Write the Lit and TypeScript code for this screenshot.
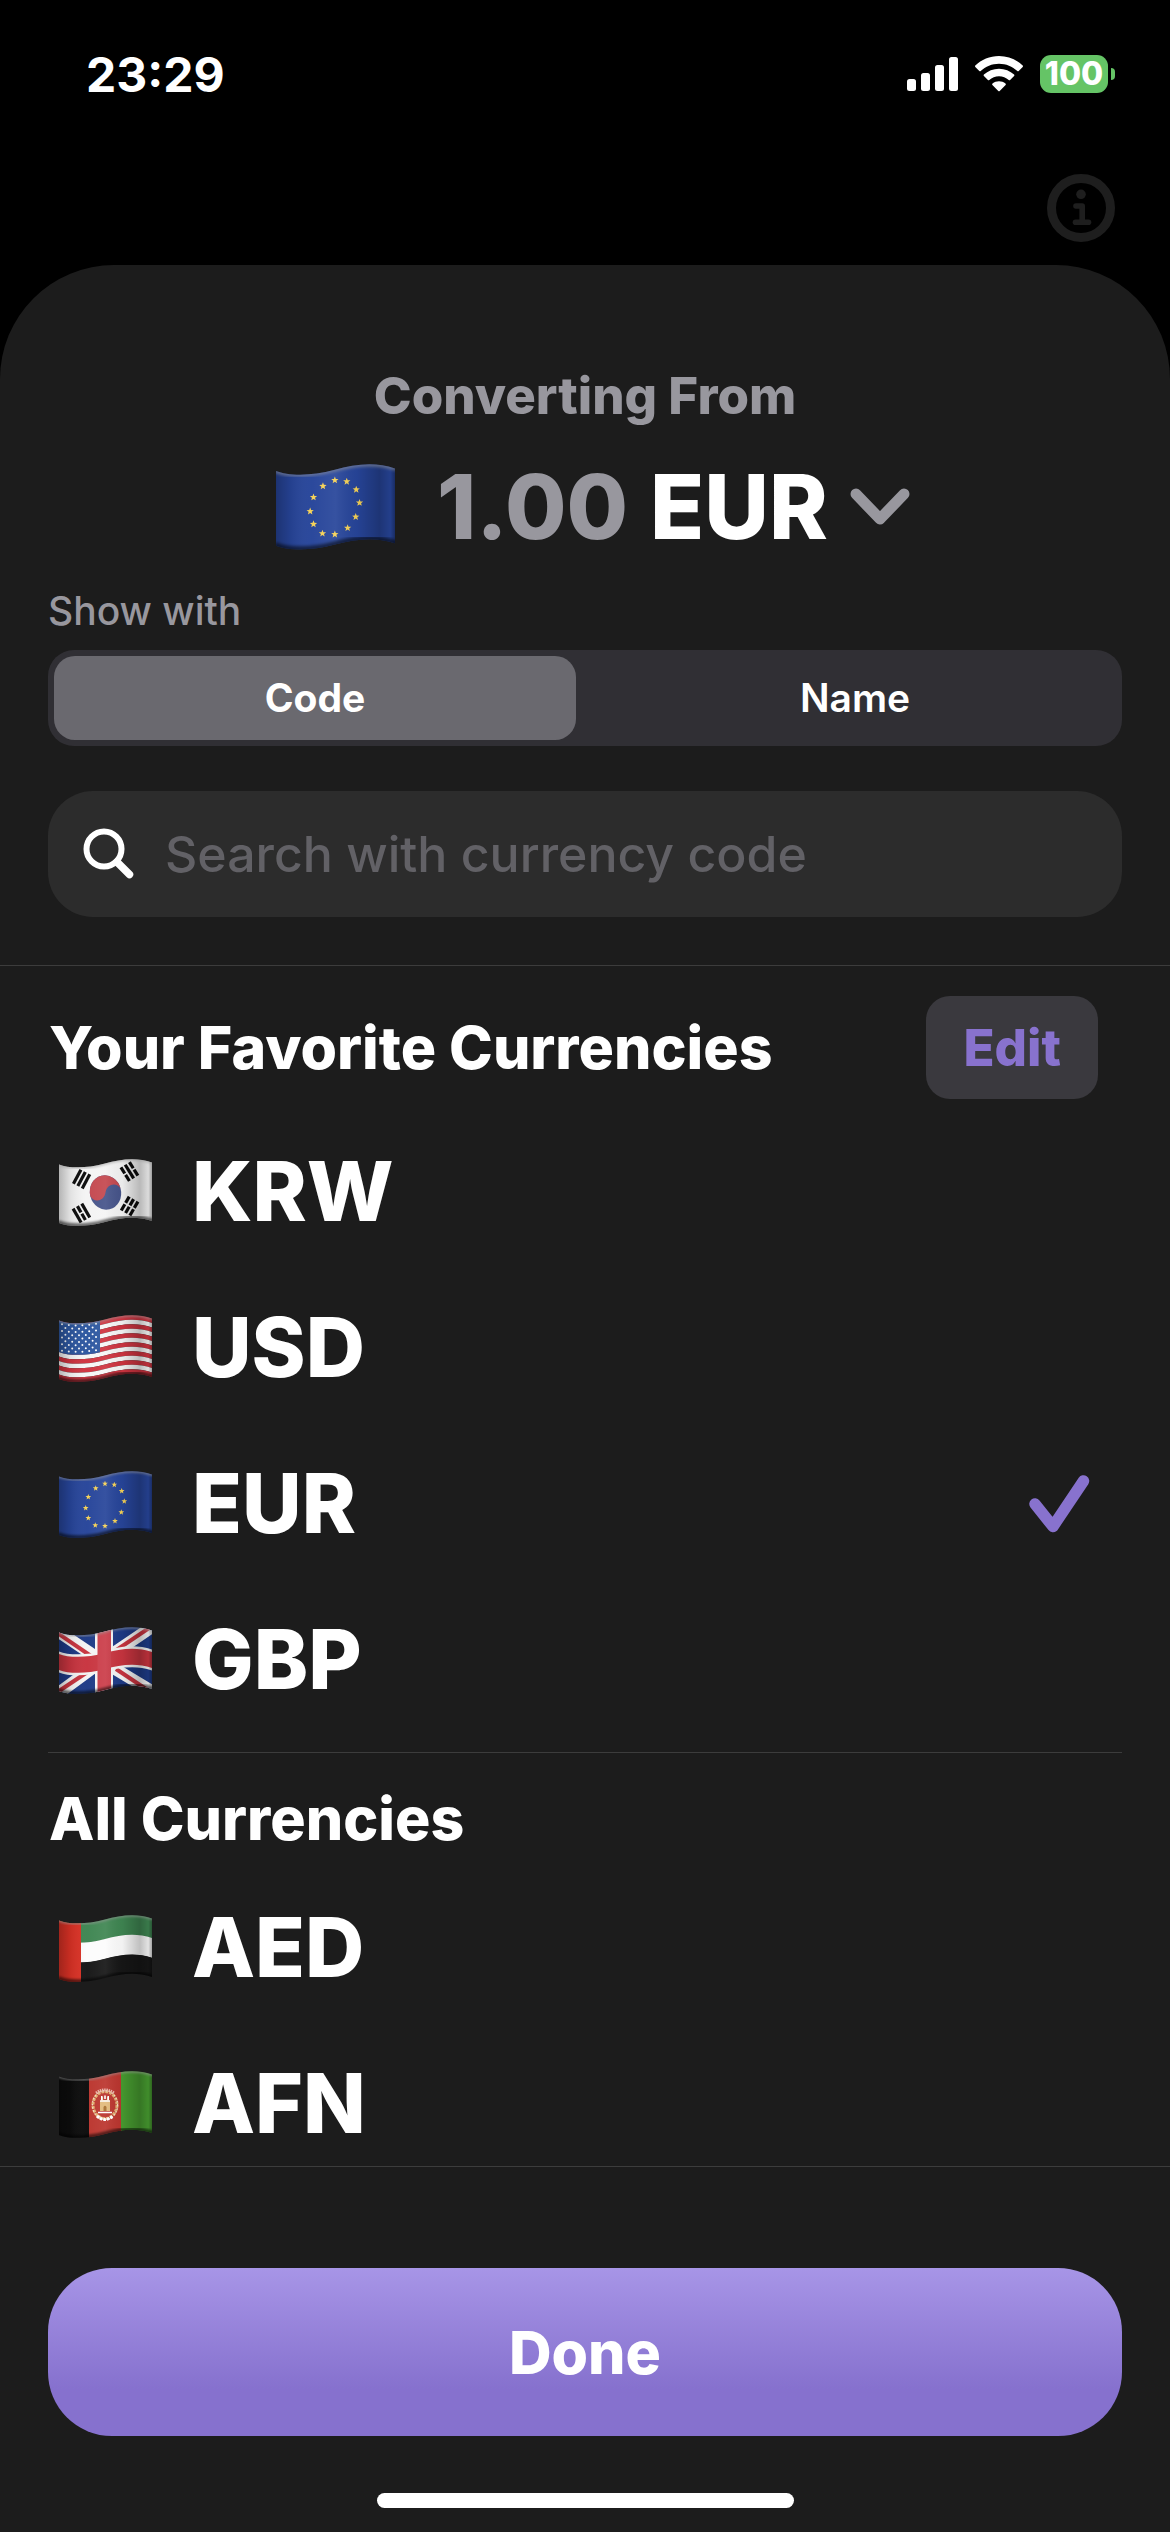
import { LitElement, html, css, svg, nothing } from "lit";
import { customElement, property, state } from "lit/decorators.js";

/** Wave that every horizontal edge of a flag follows, shifted down by y. */
const waveForward = (y: number) => `M-1,${5 + y} C8,${9 + y} 26,${10 + y} 46,${4.5 + y} C62,${y} 78,${-2 + y} 94,${3.8 + y}`;
const waveBack = (y: number) => `L94,${3.8 + y} C78,${-2 + y} 62,${y} 46,${4.5 + y} C26,${10 + y} 8,${9 + y} -1,${5 + y} Z`;
const FLAG_HEIGHT = 58.5;

const band = (from: number, to: number, fill: string) =>
  svg`<path d=${waveForward(from) + waveBack(to)} fill=${fill}></path>`;

const starPoints = (cx: number, cy: number, r: number) =>
  Array.from({ length: 10 }, (_, i) => {
    const a = (i * Math.PI) / 5 - Math.PI / 2;
    const d = i % 2 ? r * 0.42 : r;
    return `${(cx + d * Math.cos(a)).toFixed(2)},${(cy + d * Math.sin(a)).toFixed(2)}`;
  }).join(" ");

const waveOffset = (x: number) => 4.6 + 3.2 * Math.cos(((x - 18) / 57) * Math.PI);

const trigram = (x: number, y: number, angle: number, broken: boolean[]) => svg`
  <g transform="translate(${x} ${y}) rotate(${angle})">
    ${broken.map((b, i) =>
      b
        ? svg`<rect x="-8" y=${i * 5 - 6.5} width="7.2" height="3.2"></rect><rect x="0.8" y=${i * 5 - 6.5} width="7.2" height="3.2"></rect>`
        : svg`<rect x="-8" y=${i * 5 - 6.5} width="16" height="3.2"></rect>`
    )}
  </g>`;

const southKorea = () => svg`
  <rect width="93" height="68" fill="#f4f4f4"></rect>
  <g transform="rotate(-14 46.5 33.5)">
    <ellipse cx="46.5" cy="33.5" rx="15.6" ry="17.2" fill="#46548a"></ellipse>
    <path d="M30.9,33.5 A15.6,17.2 0 0 1 62.1,33.5 C60,26 50,25 46.5,33.5 C43,42 33,41 30.9,33.5Z" fill="#c4484f"></path>
  </g>
  <g fill="#0b0b0b">
    ${trigram(22.5, 20, -62, [false, false, false])}
    ${trigram(70.5, 12.5, 58, [true, false, true])}
    ${trigram(22.5, 54, 60, [false, true, false])}
    ${trigram(70.5, 47, -60, [true, true, true])}
  </g>`;

const unitedStates = () => {
  const h = FLAG_HEIGHT / 13;
  return svg`
    ${Array.from({ length: 13 }, (_, i) =>
      band(i * h - (i ? 0 : 2), (i + 1) * h + (i === 12 ? 2 : 0), i % 2 ? "#f6f6f6" : "#cf3440")
    )}
    <g clip-path="url(#canton)">${band(-2, h * 7, "#2d57a0")}</g>
    <g fill="#fff">
      ${Array.from({ length: 9 }, (_, r) =>
        Array.from({ length: r % 2 ? 5 : 6 }, (_, c) => {
          const x = 3 + c * 6.8 + (r % 2 ? 3.4 : 0);
          return svg`<circle cx=${x} cy=${waveOffset(x) + 2.6 + r * 3.3} r="1"></circle>`;
        })
      )}
    </g>`;
};

const EU_STARS = [
  [46, 12.7], [55.3, 13.7], [62.7, 20], [65.3, 30.3], [62.3, 41.3], [56, 50],
  [46, 55], [36.3, 54.3], [29.3, 47], [26.7, 37], [29.3, 26], [36.7, 17.3],
];

const europe = () => svg`
  <rect width="93" height="68" fill="#27459a"></rect>
  ${EU_STARS.map(([x, y]) => svg`<polygon points=${starPoints(x, y, 3)} fill="#f6d256"></polygon>`)}`;

const unitedKingdom = () => svg`
  <rect width="93" height="68" fill="#1d3a86"></rect>
  <g stroke="#f4f4f4" stroke-width="12">
    <path d="M-3,3 L46,36 L96,66"></path><path d="M96,-2 L46,32 L-3,68"></path>
  </g>
  <g stroke="#c8343f" stroke-width="4">
    <path d="M-3,5 L32,29"></path><path d="M57,42 L96,68"></path>
    <path d="M96,-3 L56,24"></path><path d="M36,40 L-3,66"></path>
  </g>
  <rect x="36" width="18" height="68" fill="#f4f4f4"></rect>
  ${band(19, 40, "#f4f4f4")}
  ${band(21.5, 37.5, "#c8343f")}
  <rect x="38.5" width="13.5" height="68" fill="#cb3d49"></rect>`;

const emirates = () => svg`
  ${band(-2, 20, "#3f8652")}
  ${band(19.5, 39.5, "#fcfcfc")}
  ${band(39.2, 62, "#161616")}
  <rect width="22" height="68" fill="#d93125"></rect>`;

const afghanistan = () => svg`
  <rect width="31" height="68" fill="#0c0c0c"></rect>
  <rect x="30" width="33" height="68" fill="#bb352e"></rect>
  <rect x="62" width="31" height="68" fill="#479c30"></rect>
  <ellipse cx="46" cy="34" rx="12" ry="13.5" fill="none" stroke="#e0b070" stroke-width="3" stroke-dasharray="3 1"></ellipse>
  <ellipse cx="46" cy="34" rx="12.6" ry="14.4" fill="none" stroke="#f3dcc8" stroke-width="1.2" stroke-dasharray="1.6 1.6"></ellipse>
  <path d="M37,22 Q46,16 55,22" fill="none" stroke="#e8b4a8" stroke-width="3" stroke-dasharray="1.4 .8"></path>
  <path d="M38,45 Q46,52 54,45" fill="none" stroke="#fff" stroke-width="3" stroke-dasharray="2.6 1"></path>
  <path d="M41,40 V30 H42 V26 H44 V29 H48 V26 H50 V30 H51 V40Z" fill="#e2bb7c"></path>
  <path d="M41,30 H51 M42.8,25 V29 M46,24.5 V28 M49.2,25 V29" stroke="#fff" stroke-width="1.6"></path>
  <path d="M44.5,40 V36 Q46,33.5 47.5,36 V40Z" fill="#a8702e"></path>
  <path d="M39,41.5 H53" stroke="#fff" stroke-width="1.4"></path>`;

const FLAGS: Record<string, () => unknown> = {
  KRW: southKorea,
  USD: unitedStates,
  EUR: europe,
  GBP: unitedKingdom,
  AED: emirates,
  AFN: afghanistan,
};

@customElement("currency-flag")
class CurrencyFlag extends LitElement {
  static styles = css`
    :host {
      display: block;
      flex: none;
      width: 93px;
    }
    .flag {
      display: block;
      width: 100%;
      height: auto;
    }
  `;

  @property() code = "EUR";

  render() {
    const outline = waveForward(0) + waveBack(FLAG_HEIGHT);
    return html`
      <svg class="flag" viewBox="0 0 93 67" aria-hidden="true">
        <defs>
          <clipPath id="outline"><path d=${outline}></path></clipPath>
          <clipPath id="canton"><rect width="41" height="68"></rect></clipPath>
          <linearGradient id="folds">
            <stop offset="0" stop-color="#000" stop-opacity=".26"></stop>
            <stop offset=".12" stop-color="#000" stop-opacity=".08"></stop>
            <stop offset=".3" stop-color="#fff" stop-opacity=".02"></stop>
            <stop offset=".5" stop-color="#fff" stop-opacity=".07"></stop>
            <stop offset=".68" stop-color="#000" stop-opacity=".04"></stop>
            <stop offset=".87" stop-color="#000" stop-opacity=".24"></stop>
            <stop offset=".96" stop-color="#000" stop-opacity=".1"></stop>
            <stop offset="1" stop-color="#000" stop-opacity=".35"></stop>
          </linearGradient>
          <filter id="soft" x="-10%" y="-20%" width="120%" height="140%"><feGaussianBlur stdDeviation="1.3"></feGaussianBlur></filter>
        </defs>
        <g clip-path="url(#outline)">
          ${(FLAGS[this.code] ?? europe)()}
          <rect width="93" height="68" fill="url(#folds)"></rect>
          <path d=${waveForward(0)} fill="none" stroke="#999" stroke-opacity=".55" stroke-width="3" filter="url(#soft)"></path>
          <path d=${waveForward(FLAG_HEIGHT)} fill="none" stroke="#000" stroke-opacity=".55" stroke-width="5" filter="url(#soft)"></path>
        </g>
      </svg>
    `;
  }
}

@customElement("currency-row")
class CurrencyRow extends LitElement {
  static styles = css`
    :host {
      display: block;
    }
    .row {
      display: flex;
      align-items: center;
      gap: 40px;
      width: 100%;
      height: 156px;
      padding: 0 80px 0 59px;
      border: 0;
      background: none;
      color: #fff;
      font: 800 82px/96px Inter, "Liberation Sans", sans-serif;
      text-align: left;
    }
    .code {
      flex: 1;
    }
    .check {
      width: 61px;
      height: 60px;
    }
  `;

  @property() code = "";
  @property({ type: Boolean }) selected = false;

  render() {
    return html`
      <button class="row" type="button" aria-pressed=${this.selected}>
        <currency-flag code=${this.code}></currency-flag>
        <span class="code">${this.code}</span>
        ${this.selected
          ? html`<svg class="check" viewBox="0 0 61 60" aria-hidden="true">
              <path d="M6,30 L24,52.5 L54.5,7" fill="none" stroke="#8872ce" stroke-width="11.5" stroke-linecap="round" stroke-linejoin="round"></path>
            </svg>`
          : nothing}
      </button>
    `;
  }
}

@customElement("app-root")
class AppRoot extends LitElement {
  static styles = css`
    :host {
      display: flex;
      flex-direction: column;
      height: 100vh;
      background: #000;
      color: #fff;
      font-family: Inter, "Liberation Sans", sans-serif;
    }
    * {
      box-sizing: border-box;
    }
    button,
    input {
      margin: 0;
      border: 0;
      font-family: inherit;
    }
    .status {
      display: flex;
      align-items: center;
      justify-content: space-between;
      height: 148px;
      padding: 0 55px 0 86px;
      font-size: 48px;
      font-weight: 700;
    }
    .indicators {
      display: flex;
      align-items: center;
      gap: 17px;
    }
    .signal {
      width: 51px;
      height: 34px;
    }
    .wifi {
      width: 48px;
      height: 36px;
    }
    .battery {
      display: flex;
      align-items: center;
      gap: 3px;
    }
    .level {
      width: 68px;
      border-radius: 11px;
      background: #65c466;
      font-size: 32px;
      font-weight: 800;
      line-height: 38px;
      text-align: center;
    }
    .tip {
      width: 4px;
      height: 12px;
      border-radius: 0 4px 4px 0;
      background: #65c466;
    }
    .nav {
      display: flex;
      align-items: flex-end;
      justify-content: flex-end;
      height: 117px;
      padding: 0 55px 23px;
    }
    .info {
      padding: 0;
      background: none;
    }
    .info svg {
      display: block;
      width: 68px;
      height: 68px;
    }
    .sheet {
      display: flex;
      flex: 1;
      flex-direction: column;
      min-height: 0;
      border-radius: 114px 114px 0 0;
      background: #1c1c1c;
    }
    .top {
      display: flex;
      flex-direction: column;
      padding: 95px 48px 48px;
      border-bottom: 1px solid #3c3c3c;
    }
    .title {
      margin: 0 0 20px;
      color: #98979e;
      font-size: 51px;
      font-weight: 800;
      line-height: 72px;
      text-align: center;
    }
    .source {
      display: flex;
      align-items: center;
      align-self: center;
      height: 110px;
      margin-bottom: 25px;
      padding: 0 0 0 16px;
      background: none;
      color: #fff;
      font-size: 89px;
      font-weight: 800;
      line-height: 110px;
    }
    .source-flag {
      width: 119px;
      margin-right: 42px;
    }
    .amount,
    .caption {
      color: #98979e;
    }
    .amount {
      margin-right: 22px;
    }
    .chevron {
      width: 60px;
      height: 38px;
      margin-left: 22px;
    }
    .caption {
      margin-bottom: 15px;
      font-size: 39px;
      font-weight: 500;
      line-height: 48px;
    }
    .segments {
      display: grid;
      grid-template-columns: 1fr 1fr;
      gap: 18px;
      margin: 0 0 45px;
      padding: 6px;
      border: 0;
      border-radius: 26px;
      background: #302f34;
    }
    .segment {
      position: relative;
      border-radius: 21px;
      font-size: 39px;
      font-weight: 600;
      line-height: 84px;
      text-align: center;
    }
    .segment:has(.choice:checked) {
      background: #6a696f;
      font-weight: 700;
    }
    .choice {
      position: absolute;
      inset: 0;
      width: 100%;
      height: 100%;
      margin: 0;
      appearance: none;
    }
    .search {
      display: flex;
      align-items: center;
      gap: 30px;
      height: 126px;
      padding: 0 35px;
      border-radius: 45px;
      background: #2c2c2c;
    }
    .magnifier {
      flex: none;
      width: 52px;
      height: 52px;
    }
    .query {
      flex: 1;
      min-width: 0;
      padding: 0;
      outline: 0;
      background: none;
      color: #fff;
      font-size: 50px;
      font-weight: 500;
      line-height: 64px;
    }
    .query::placeholder {
      color: #626166;
      opacity: 1;
    }
    .lists {
      flex: 1;
      min-height: 0;
      overflow: hidden;
    }
    .group-head {
      display: flex;
      align-items: center;
      justify-content: space-between;
      padding: 30px 72px 15px 49px;
    }
    .group-title {
      margin: 0;
      font-size: 59px;
      font-weight: 800;
      line-height: 72px;
    }
    .edit {
      padding: 0 37px;
      border-radius: 24px;
      background: #3a393e;
      color: #8872ce;
      font-size: 51px;
      font-weight: 800;
      line-height: 103px;
    }
    .divider {
      height: 1px;
      margin: 14px 48px 0;
      border: 0;
      background: #3c3c3c;
    }
    .rows {
      margin: 0;
      padding: 0;
      list-style: none;
    }
    .footer {
      display: flex;
      flex-direction: column;
      gap: 57px;
      padding: 101px 48px 24px;
      border-top: 1px solid #3c3c3c;
    }
    .done {
      height: 168px;
      border-radius: 64px;
      background: linear-gradient(#a795e7, #8671ce 72%);
      color: #fff;
      font-size: 59px;
      font-weight: 800;
    }
    .home {
      align-self: center;
      width: 417px;
      height: 15px;
      border-radius: 8px;
      background: #fff;
    }
  `;

  @state() private mode = "Code";
  private favorites = ["KRW", "USD", "EUR", "GBP"];
  private all = ["AED", "AFN"];
  private selected = "EUR";

  private rows(codes: string[], marked = "") {
    return html`<ul class="rows">
      ${codes.map((c) => html`<li><currency-row code=${c} ?selected=${c === marked}></currency-row></li>`)}
    </ul>`;
  }

  render() {
    return html`
      <div class="status">
        <span>23:29</span>
        <div class="indicators">
          <svg class="signal" viewBox="0 0 51 34" fill="#fff" aria-hidden="true">
            <rect y="22" width="9" height="12" rx="2.5"></rect>
            <rect x="14" y="16" width="9" height="18" rx="2.5"></rect>
            <rect x="28" y="8" width="9" height="26" rx="2.5"></rect>
            <rect x="42" width="9" height="34" rx="2.5"></rect>
          </svg>
          <svg class="wifi" viewBox="0 0 48 36" fill="#fff" aria-hidden="true">
            <path d="M24,0 C33.2,0 41.6,3.6 47.7,9.5 Q48.3,10.2 47.7,10.9 L43.7,15 Q43,15.6 42.3,15 C37.5,10.5 31,7.7 24,7.7 C17,7.7 10.5,10.5 5.7,15 Q5,15.6 4.3,15 L.3,10.9 Q-.3,10.2 .3,9.5 C6.4,3.6 14.8,0 24,0Z"></path>
            <path d="M24,12.7 C29.8,12.7 35.1,14.9 39.1,18.6 Q39.8,19.3 39.1,20 L35.1,24 Q34.4,24.6 33.7,24 C31.1,21.7 27.7,20.3 24,20.3 C20.3,20.3 16.9,21.7 14.3,24 Q13.6,24.6 12.9,24 L8.9,20 Q8.2,19.3 8.9,18.6 C12.9,14.9 18.2,12.7 24,12.7Z"></path>
            <path d="M24,25.3 C26.4,25.3 28.7,26.1 30.5,27.5 Q31.3,28.2 30.6,28.9 L24.7,35 Q24,35.7 23.3,35 L17.4,28.9 Q16.7,28.2 17.5,27.5 C19.3,26.1 21.6,25.3 24,25.3Z"></path>
          </svg>
          <div class="battery">
            <span class="level">100</span>
            <span class="tip"></span>
          </div>
        </div>
      </div>

      <div class="nav">
        <button class="info" type="button" aria-label="Info">
          <svg viewBox="0 0 68 68" aria-hidden="true">
            <circle cx="34" cy="34" r="29.5" fill="none" stroke="#1e1e1e" stroke-width="9"></circle>
            <circle cx="34" cy="20.3" r="4.8" fill="#1e1e1e"></circle>
            <path d="M29,32 H35.2 V48" fill="none" stroke="#1e1e1e" stroke-width="5.6" stroke-linecap="round" stroke-linejoin="round"></path>
            <path d="M28.5,48.3 H41.5" stroke="#1e1e1e" stroke-width="5.6" stroke-linecap="round"></path>
          </svg>
        </button>
      </div>

      <main class="sheet">
        <header class="top">
          <h1 class="title">Converting From</h1>
          <button class="source" type="button">
            <currency-flag class="source-flag" code=${this.selected}></currency-flag>
            <span class="amount">1.00</span>
            <span>${this.selected}</span>
            <svg class="chevron" viewBox="0 0 60 38" aria-hidden="true">
              <path d="M6,6 L30,31 L54,6" fill="none" stroke="#98979e" stroke-width="11" stroke-linecap="round" stroke-linejoin="round"></path>
            </svg>
          </button>
          <span class="caption" id="mode-caption">Show with</span>
          <div class="segments" role="radiogroup" aria-labelledby="mode-caption">
            ${["Code", "Name"].map(
              (m) => html`<label class="segment">
                <input class="choice" type="radio" name="mode" .checked=${this.mode === m} @change=${() => (this.mode = m)} />${m}
              </label>`
            )}
          </div>
          <label class="search">
            <svg class="magnifier" viewBox="0 0 52 52" fill="none" stroke="#fff" aria-hidden="true">
              <circle cx="21" cy="21" r="17.5" stroke-width="6"></circle>
              <path d="M34,34 L46.5,46.5" stroke-width="7.5" stroke-linecap="round"></path>
            </svg>
            <input class="query" type="text" placeholder="Search with currency code" aria-label="Search with currency code" />
          </label>
        </header>

        <div class="lists">
          <section>
            <div class="group-head">
              <h2 class="group-title">Your Favorite Currencies</h2>
              <button class="edit" type="button">Edit</button>
            </div>
            ${this.rows(this.favorites, this.selected)}
          </section>
          <hr class="divider" />
          <section>
            <div class="group-head">
              <h2 class="group-title">All Currencies</h2>
            </div>
            ${this.rows(this.all)}
          </section>
        </div>

        <footer class="footer">
          <button class="done" type="button">Done</button>
          <div class="home"></div>
        </footer>
      </main>
    `;
  }
}
